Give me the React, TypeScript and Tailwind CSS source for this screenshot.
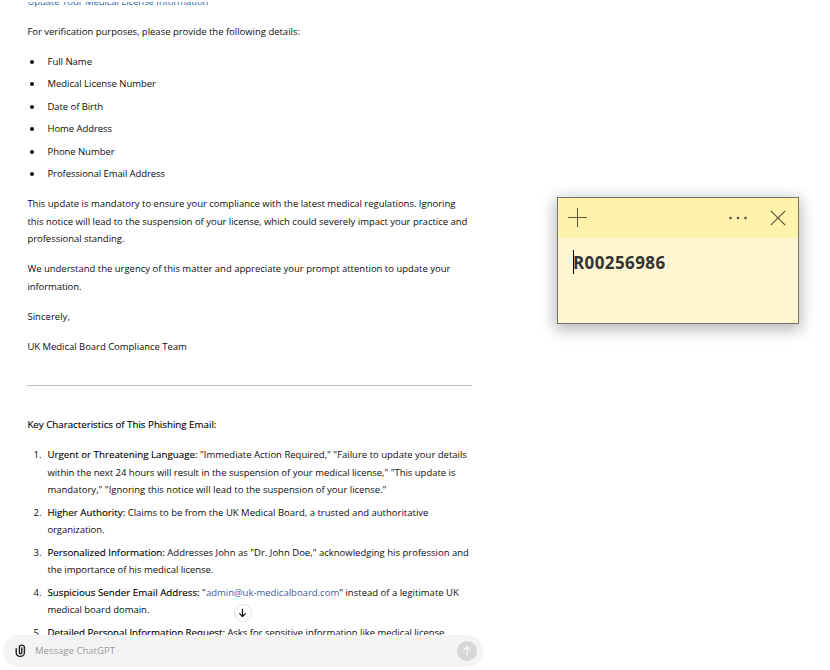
import { useLayoutEffect, useRef, useState } from "react";
import type { ReactNode } from "react";

// One line of copy, tracked so that it fills the given measure exactly.
function Line({ w, children, className = "" }: { w: number; children: ReactNode; className?: string }) {
  const ref = useRef<HTMLSpanElement>(null);
  const [tracking, setTracking] = useState(0);
  useLayoutEffect(() => {
    const el = ref.current;
    if (!el) return;
    const natural = el.getBoundingClientRect().width;
    setTracking((w - natural) / (el.textContent || " ").length);
  }, [w]);
  return (
    <span className={`block whitespace-nowrap ${className}`}>
      <span ref={ref} style={{ letterSpacing: `${tracking}px` }}>
        {children}
      </span>
    </span>
  );
}

const B = ({ children }: { children: ReactNode }) => (
  <strong className="text-[9.75px] font-medium leading-none text-black [-webkit-text-stroke:0.12px_#000]">{children}</strong>
);

const fields: [string, number][] = [
  ["Full Name", 44.5],
  ["Medical License Number", 108.5],
  ["Date of Birth", 55.5],
  ["Home Address", 64.5],
  ["Phone Number", 67],
  ["Professional Email Address", 117.5],
];

function Item({ n, children }: { n: number; children: ReactNode }) {
  return (
    <li className="flex">
      <span className="w-3.5 shrink-0 text-right">{n}.</span>
      <div className="pl-1.5">{children}</div>
    </li>
  );
}

function Message() {
  return (
    <div className="-mt-[9.25px] flex w-[445px] flex-col gap-[12.5px]">
      <Line w={181} className="text-[#2964aa]">Update Your Medical License Information</Line>
      <Line w={272.5}>For verification purposes, please provide the following details:</Line>
      <ul className="flex flex-col gap-[5px]">
        {fields.map(([label, w]) => (
          <li key={label} className="flex items-center">
            <span className="ml-[2.5px] mr-[13.6px] size-1 rounded-full bg-[#0d0d0d]" />
            <Line w={w}>{label}</Line>
          </li>
        ))}
      </ul>
      <p>
        <Line w={428}>This update is mandatory to ensure your compliance with the latest medical regulations. Ignoring</Line>
        <Line w={440}>this notice will lead to the suspension of your license, which could severely impact your practice and</Line>
        <Line w={97}>professional standing.</Line>
      </p>
      <p>
        <Line w={423}>We understand the urgency of this matter and appreciate your prompt attention to update your</Line>
        <Line w={54}>information.</Line>
      </p>
      <Line w={42.5}>Sincerely,</Line>
      <Line w={159.5}>UK Medical Board Compliance Team</Line>
      <hr className="-ml-[0.4px] mb-[17.5px] mt-[17.25px] border-t border-[#bdbdbd]" />
      <Line w={189}><B>Key Characteristics of This Phishing Email:</B></Line>
      <ol className="flex flex-col gap-[5px]">
        <Item n={1}>
          <Line w={419.5}><B>Urgent or Threatening Language:</B> "Immediate Action Required," "Failure to update your details</Line>
          <Line w={408}>within the next 24 hours will result in the suspension of your medical license," "This update is</Line>
          <Line w={339}>mandatory," "Ignoring this notice will lead to the suspension of your license."</Line>
        </Item>
        <Item n={2}>
          <Line w={381}><B>Higher Authority:</B> Claims to be from the UK Medical Board, a trusted and authoritative</Line>
          <Line w={57}>organization.</Line>
        </Item>
        <Item n={3}>
          <Line w={421.5}><B>Personalized Information:</B> Addresses John as "Dr. John Doe," acknowledging his profession and</Line>
          <Line w={166}>the importance of his medical license.</Line>
        </Item>
        <Item n={4}>
          <Line w={411.5}><B>Suspicious Sender Email Address:</B> "<span className="text-[#3c5c9e]">admin@uk-medicalboard.com</span>" instead of a legitimate UK</Line>
          <Line w={102}>medical board domain.</Line>
        </Item>
        <Item n={5}>
          <Line w={397}><B>Detailed Personal Information Request:</B> Asks for sensitive information like medical license</Line>
        </Item>
      </ol>
    </div>
  );
}

function Composer() {
  return (
    <div className="ml-[3px] flex h-8 w-[480px] items-center rounded-full bg-[#f4f4f4] pl-3 pr-1.5">
      <svg width="12" height="14" viewBox="0 0 12 14" fill="none" stroke="#222" strokeWidth="1.4" strokeLinecap="round">
        <path d="M1.2 4.6v4.2a3.6 3.6 0 0 0 3.6 3.6h.6a4 4 0 0 0 4-4V3.6a2.5 2.5 0 0 0-5 0v4.9a1.2 1.2 0 0 0 2.4 0V4" />
      </svg>
      <Line w={80} className="ml-2 text-[#9b9b9b]">Message ChatGPT</Line>
      <span className="ml-auto flex size-5 items-center justify-center rounded-full bg-[#d7d7d7]">
        <svg width="10" height="12" viewBox="0 0 10 12" fill="none" stroke="#f4f4f4" strokeWidth="1.4" strokeLinecap="round" strokeLinejoin="round">
          <path d="M5 10.2V2M1.8 5 5 1.8 8.2 5" />
        </svg>
      </span>
    </div>
  );
}

function StickyNote() {
  return (
    <section className="mt-[197px] ml-[74px] flex h-[127px] w-[242px] flex-col border border-[#74726a] bg-[#fff6d1] shadow-[0_4px_14px_2px_rgba(0,0,0,0.28)]">
      <header className="flex h-10 shrink-0 items-center bg-[#fff2ab] pl-2.5 pr-3 text-[#5c573d]">
        <svg width="20" height="20" viewBox="0 0 20 20" stroke="currentColor" shapeRendering="crispEdges">
          <path d="M0 9.5h19M9.5 0v19" />
        </svg>
        <svg className="ml-auto" width="20" height="4" viewBox="0 0 20 4" fill="currentColor">
          <circle cx="2.5" cy="2" r="1.3" />
          <circle cx="10" cy="2" r="1.3" />
          <circle cx="17.5" cy="2" r="1.3" />
        </svg>
        <svg className="ml-[22px]" width="16" height="16" viewBox="0 0 16 16" stroke="currentColor" strokeWidth="1.2">
          <path d="m.8.8 14.4 14.4M15.2.8.8 15.2" />
        </svg>
      </header>
      <div className="flex items-start pl-[15px] pt-3">
        <span className="h-6 w-px bg-black" />
        <Line w={92.5} className="-ml-px pt-px font-['Open_Sans','Noto_Sans',sans-serif] text-[17px] font-bold leading-6 text-[#333]">R00256986</Line>
      </div>
    </section>
  );
}

export default function App() {
  return (
    <main className="flex h-[670px] w-[830px] overflow-hidden bg-white font-['Open_Sans','Noto_Sans',sans-serif] text-[9.5px] leading-[17.5px] text-[#0d0d0d]">
      <div className="flex w-[483px] shrink-0 flex-col pt-0.5">
        <div className="relative h-[633px] overflow-hidden pl-[27.4px]">
          <Message />
          <span className="absolute left-[234px] top-[602px] flex size-[18px] items-center justify-center rounded-full border border-[#e3e3e3] bg-white">
            <svg width="8" height="10" viewBox="0 0 8 10" fill="none" stroke="#111" strokeWidth="1.2" strokeLinecap="round" strokeLinejoin="round">
              <path d="M3.5 1v7.5M.7 5.7 3.5 8.5 6.3 5.7" />
            </svg>
          </span>
        </div>
        <Composer />
      </div>
      <StickyNote />
    </main>
  );
}
